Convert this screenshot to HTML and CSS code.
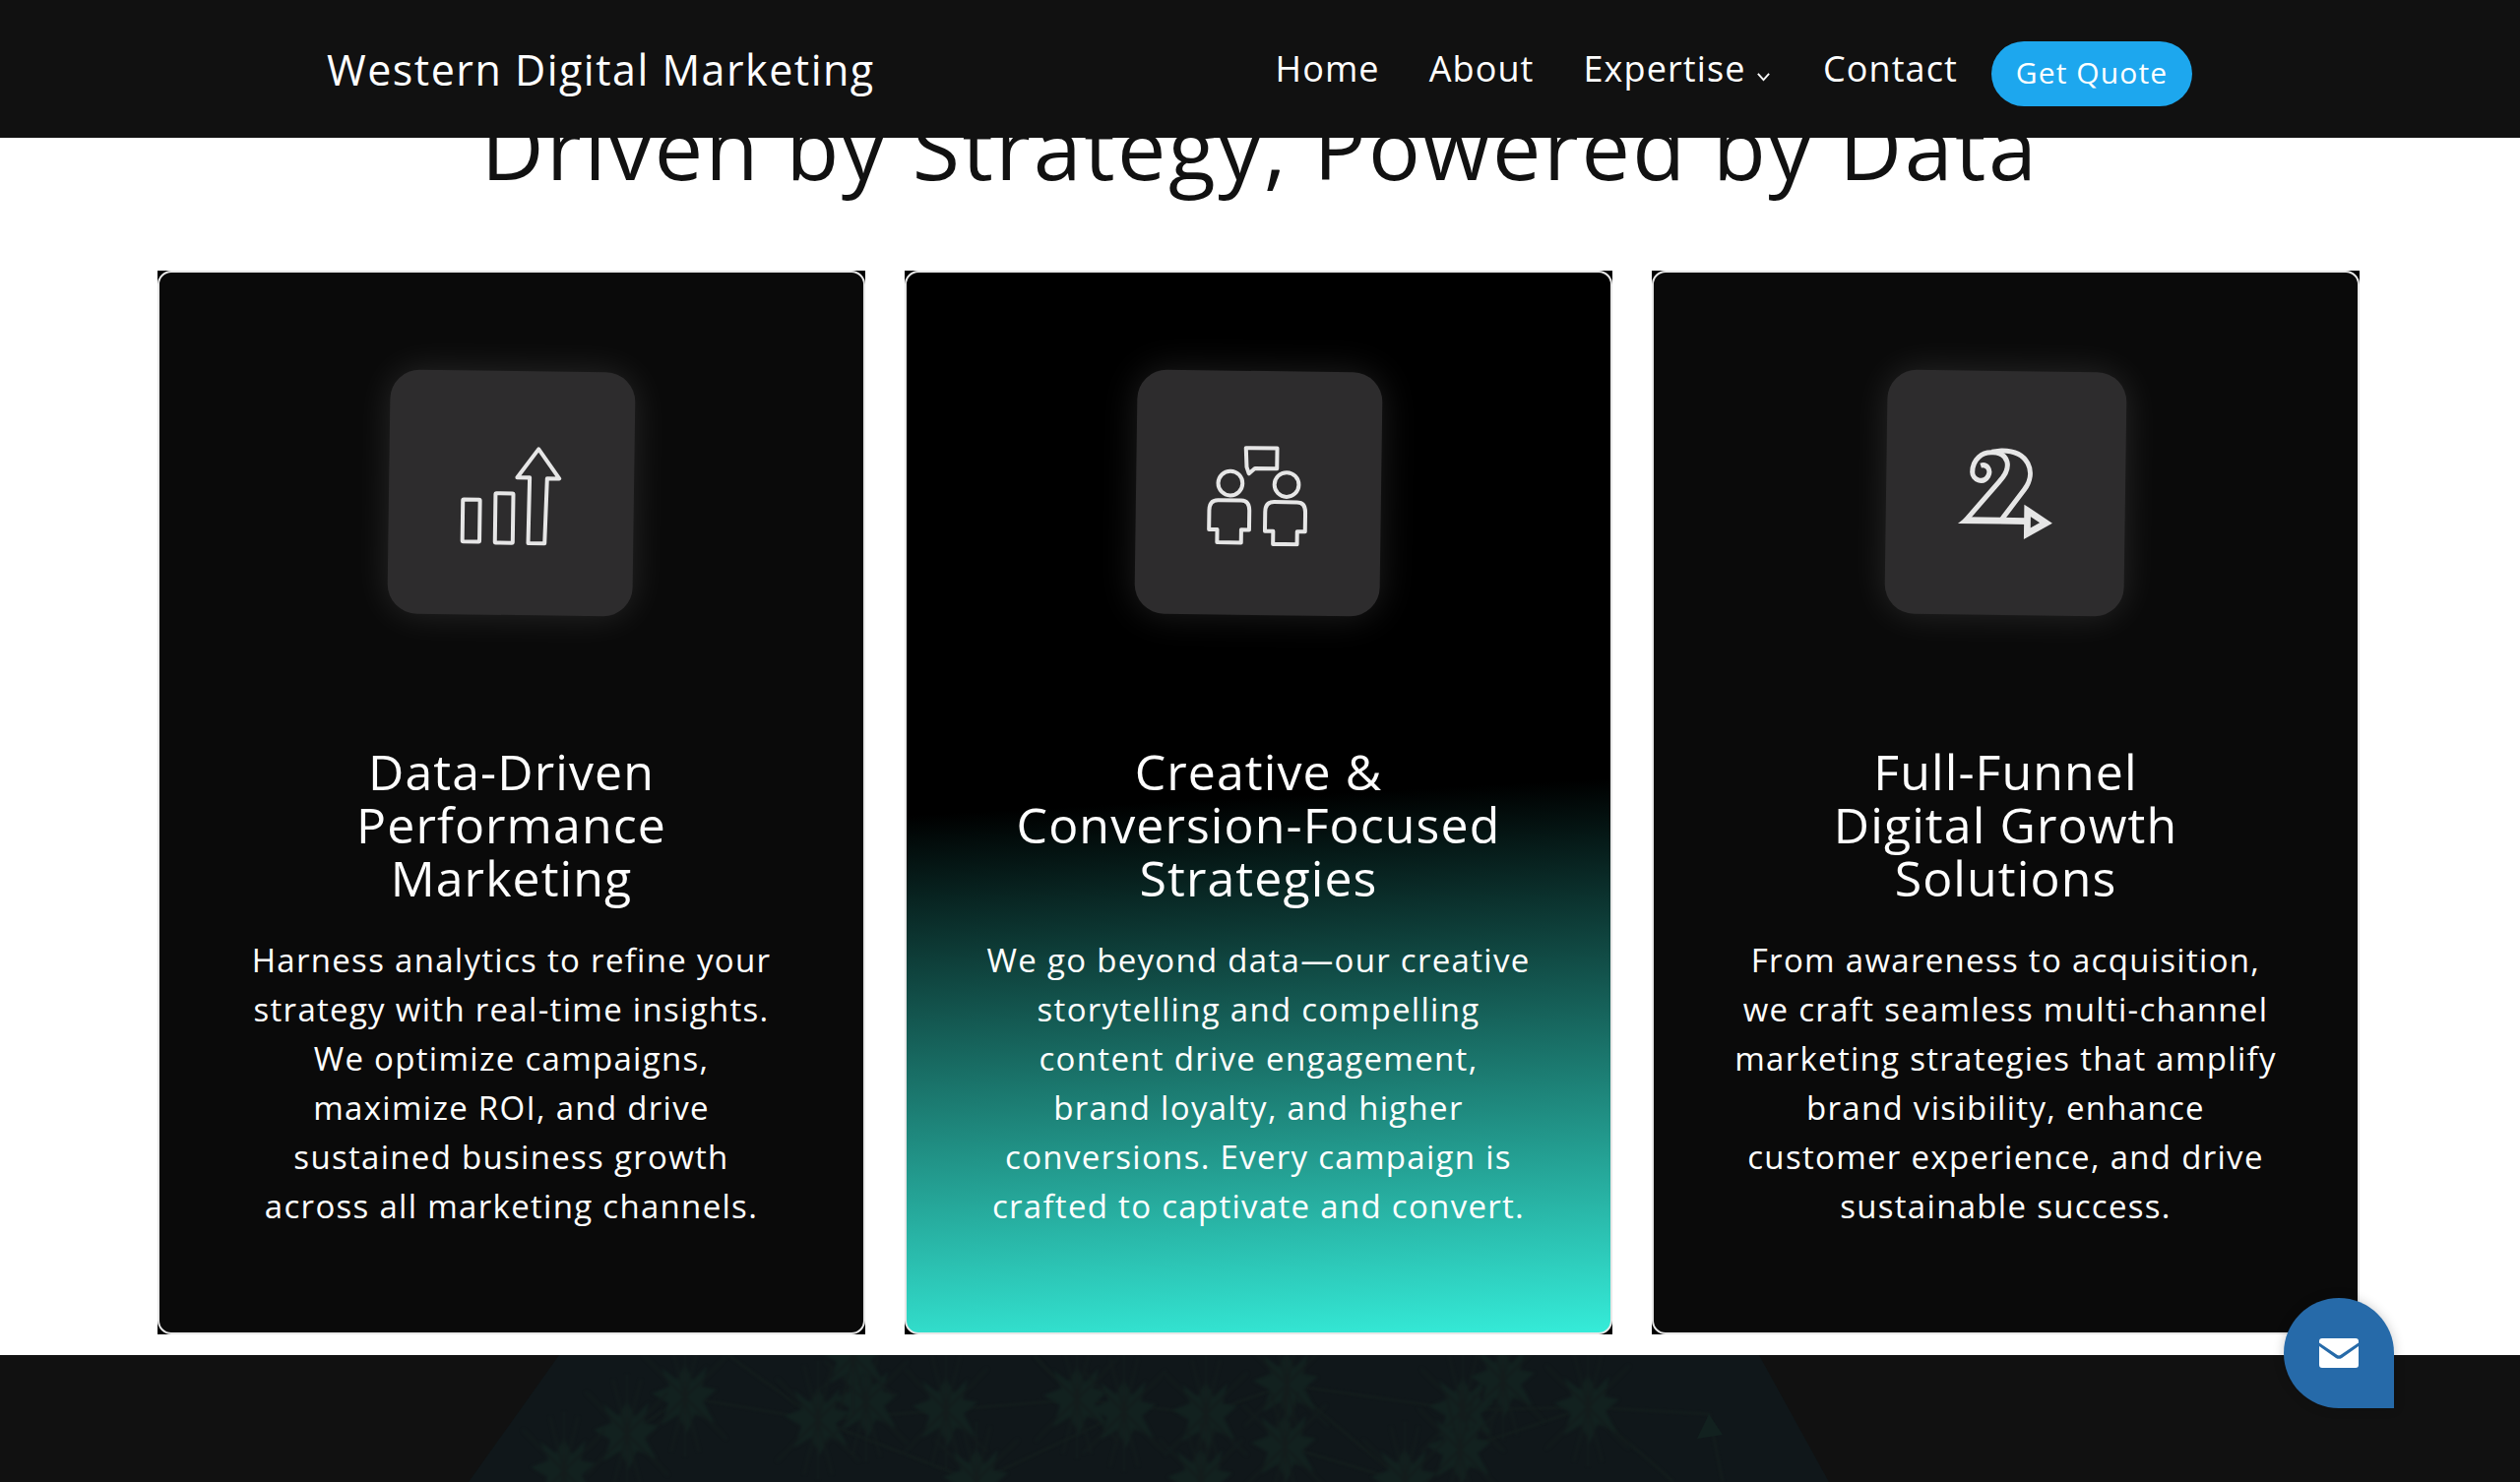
FILE: index.html
```html
<!DOCTYPE html>
<html lang="en">

<head>
    <meta charset="UTF-8">
    <meta name="viewport" content="width=device-width, initial-scale=1.0">
    <title>Western Digital Marketing</title>
    <link rel="stylesheet" href="styles.css">
</head>

<body>
    <header class="site_header">
        <a class="brand" href="#">Western Digital Marketing</a>
        <nav class="main_nav">
            <a href="#">Home</a>
            <a href="#">About</a>
            <a class="nav_drop" href="#">Expertise
                <svg class="caret" viewBox="0 0 12 8" width="15" height="10"><path d="M1.500 1.500 6 6.500l4.500-5" fill="none" stroke="#fff" stroke-width="1.500"/></svg>
            </a>
            <a href="#">Contact</a>
            <a class="quote_btn" href="#">Get Quote</a>
        </nav>
    </header>

    <section class="features">
        <h2 class="features_title">Driven by Strategy, Powered by Data</h2>
        <div class="card_row">
            <div class="card_frame">
                <article class="card">
                    <div class="icon_tile">
                        <svg class="tile_icon" viewBox="290 292 320 320" width="107" height="107">
                            <rect x="303" y="472" width="52" height="128" rx="3"/>
                            <rect x="402" y="452" width="54" height="150" rx="3"/>
                            <path d="M503 602 505 403H467L531 316 595 405H558L553 602Z"/>
                        </svg>
                    </div>
                    <h3>Data-Driven<br>Performance<br>Marketing</h3>
                    <p>Harness analytics to refine your<br>strategy with real-time insights.<br>We optimize campaigns,<br>maximize ROI, and drive<br>sustained business growth<br>across all marketing channels.</p>
                </article>
            </div>
            <div class="card_frame">
                <article class="card card_accent">
                    <div class="icon_tile">
                        <svg class="tile_icon" viewBox="287 292 320 320" width="107" height="107">
                            <path d="M407 314H502V376H435L417 392 410 372Z"/>
                            <circle cx="361" cy="422" r="37"/>
                            <circle cx="532" cy="424" r="37"/>
                            <path d="M325 474H395Q420 474 420 505V563H396V602H323V563H298V505Q298 474 325 474Z"/>
                            <path d="M495 477H565Q590 477 590 508V566H566V605H493V566H468V508Q468 477 495 477Z"/>
                        </svg>
                    </div>
                    <h3>Creative &amp;<br>Conversion-Focused<br>Strategies</h3>
                    <p>We go beyond data—our creative<br>storytelling and compelling<br>content drive engagement,<br>brand loyalty, and higher<br>conversions. Every campaign is<br>crafted to captivate and convert.</p>
                </article>
            </div>
            <div class="card_frame">
                <article class="card">
                    <div class="icon_tile icon_tile_narrow">
                        <svg class="tile_icon tile_icon_bold" viewBox="284 292 320 320" width="107" height="107">
                            <path d="M322 537 425 415C465 370 450 330 405 328 370 325 342 350 342 388 342 412 375 425 390 400 400 380 385 362 367 368"/>
                            <path d="M430 535 500 440C540 385 510 320 430 322L400 326"/>
                            <path class="icon_base" d="M300 545 325 525H510V545Z"/>
                            <path class="icon_head" d="M511 503 568 540 511 573Z"/>
                        </svg>
                    </div>
                    <h3>Full-Funnel<br>Digital Growth<br>Solutions</h3>
                    <p>From awareness to acquisition,<br>we craft seamless multi-channel<br>marketing strategies that amplify<br>brand visibility, enhance<br>customer experience, and drive<br>sustainable success.</p>
                </article>
            </div>
        </div>
    </section>

    <footer class="site_footer">
        <svg class="footer_net" viewBox="0 1377 2560 129" width="2560" height="129">
            <defs>
                <g id="burst">
                    <path d="M0-34 8-17 22-32 17-11 32-8 18 4 30 26 10 17 2 36-7 18-24 28-17 6-34-4-16-11-24-30-8-18Z"/>
                    <path class="burst_ray" d="M0-60V60M-14-55 14 55M14-55-14 55M-42-42 42 42M42-42-42 42"/>
                </g>
            </defs>
            <path class="net_dome" d="M568 1377 476 1506H1858L1787 1377Z"/>
            <g class="net_links">
                <path d="M696 1420 831 1443 961 1433 1094 1422 1225 1437 1307 1407 1486 1433 1613 1430 1736 1437 1750 1506"/>
                <path d="M637 1457 696 1420M831 1443 992 1506M1142 1435 992 1506M1307 1470 1427 1506M1307 1407 1427 1506M1483 1473 1613 1430M1613 1430 1700 1506"/>
                <path d="M740 1377 831 1443M1050 1377 1094 1422"/>
            </g>
            <g class="net_bursts">
                <use href="#burst" x="696" y="1420"/>
                <use href="#burst" x="637" y="1457"/>
                <use href="#burst" x="831" y="1443"/>
                <use href="#burst" x="880" y="1425"/>
                <use href="#burst" x="961" y="1433"/>
                <use href="#burst" x="1094" y="1422"/>
                <use href="#burst" x="1142" y="1435"/>
                <use href="#burst" x="573" y="1495"/>
                <use href="#burst" x="992" y="1505"/>
                <use href="#burst" x="867" y="1378"/>
                <use href="#burst" x="1225" y="1437"/>
                <use href="#burst" x="1307" y="1407"/>
                <use href="#burst" x="1305" y="1470"/>
                <use href="#burst" x="1486" y="1433"/>
                <use href="#burst" x="1527" y="1403"/>
                <use href="#burst" x="1483" y="1473"/>
                <use href="#burst" x="1613" y="1430"/>
                <use href="#burst" x="1427" y="1505"/>
                <use href="#burst" x="1220" y="1505"/>
            </g>
            <path class="net_tail" d="M1736 1437 1724 1462 1750 1458Z"/>
        </svg>
    </footer>

    <a class="mail_fab" href="#">
        <svg viewBox="0 0 40 30" width="40" height="30"><path d="M3 0h34a3 3 0 0 1 3 3v1.500L21.500 17a3 3 0 0 1-3 0L0 4.500V3a3 3 0 0 1 3-3z" fill="#fff"/><path d="M0 8v19a3 3 0 0 0 3 3h34a3 3 0 0 0 3-3V8L23 20a6 6 0 0 1-6 0z" fill="#fff"/></svg>
    </a>
</body>

</html>
```

FILE: styles.css
```css
body {
    padding: 0;
    margin: 0;
    height: 1506px;
    overflow: hidden;
    background-color: #fff;
    font-family: "Open Sans", sans-serif;
}

a {
    color: #fff;
    text-decoration: none;
}

.site_header {
    position: relative;
    z-index: 2;
    height: 140px;
    box-sizing: border-box;
    padding: 0 333px 0 332px;
    display: flex;
    align-items: center;
    justify-content: space-between;
    background-color: #111;
}

.brand {
    font-size: 43px;
    letter-spacing: 1.5px;
}

.main_nav {
    display: flex;
    align-items: center;
    font-size: 36px;
    letter-spacing: 1.1px;
    gap: 50px;
    padding-bottom: 2px;
}

.nav_drop {
    margin-right: 3px;
}

.quote_btn {
    margin-left: -16px;
    width: 204px;
    height: 66px;
    box-sizing: border-box;
    padding-bottom: 3px;
    margin-top: 12px;
    border-radius: 33px;
    background-color: #1da7ee;
    font-size: 30px;
    display: flex;
    align-items: center;
    justify-content: center;
}

.features {
    height: 1237px;
    box-sizing: border-box;
    overflow: hidden;
}

.features_title {
    margin: -33px 0 0;
    height: 168px;
    line-height: 84px;
    font-size: 88px;
    letter-spacing: 2.5px;
    font-weight: 400;
    text-align: center;
    color: #111;
}

.card_row {
    display: grid;
    grid-template-columns: repeat(3, 719px);
    column-gap: 40px;
    padding-left: 160px;
}

.card_frame {
    background-color: #000;
}

.card {
    height: 1081px;
    box-sizing: border-box;
    padding: 100px 30px 0;
    border: 2px solid #e8e8e8;
    border-radius: 14px;
    background-color: #0a0a0a;
    color: #fff;
    text-align: center;
}

.card_accent {
    background: linear-gradient(177deg, #000 49.5%, #35ecd9 100%);
}

.icon_tile {
    width: 249px;
    height: 248px;
    margin: 0 auto 132px;
    border-radius: 30px;
    background-color: #2d2c2d;
    box-shadow: 0 0 36px rgba(255, 255, 255, 0.12);
    transform: rotate(0.8deg);
    display: flex;
    align-items: center;
    justify-content: center;
}

.icon_tile_narrow {
    width: 243px;
}

.tile_icon {
    fill: none;
    stroke: #e6e6e6;
    stroke-width: 12;
    stroke-linejoin: round;
}

.tile_icon_bold {
    stroke-width: 15;
}

.icon_base {
    fill: #e6e6e6;
    stroke: none;
}

.icon_head {
    stroke-width: 20;
    stroke-linejoin: miter;
}

.card h3 {
    margin: 0 0 32px;
    font-size: 50px;
    letter-spacing: 1.1px;
    line-height: 54px;
    font-weight: 400;
}

.card p {
    margin: 0;
    font-size: 33px;
    letter-spacing: 1.3px;
    line-height: 49.9px;
    font-weight: 400;
}

.site_footer {
    height: 129px;
    background-color: #111;
    overflow: hidden;
}

.footer_net {
    display: block;
}

.net_dome {
    fill: #10171a;
}

.net_links {
    fill: none;
    stroke: #131c1c;
    stroke-width: 3;
    filter: blur(1px);
}

.net_bursts {
    fill: #12211f;
    filter: blur(1.5px);
}

.burst_ray {
    fill: none;
    stroke: #131c1c;
    stroke-width: 2;
}

.net_tail {
    fill: #12211f;
}

.mail_fab {
    position: fixed;
    left: 2320px;
    top: 1319px;
    width: 112px;
    height: 112px;
    border-radius: 50% 50% 0 50%;
    background-color: #266aa9;
    box-shadow: 0 0 12px rgba(0, 0, 0, 0.2);
    display: flex;
    align-items: center;
    justify-content: center;
}
```
